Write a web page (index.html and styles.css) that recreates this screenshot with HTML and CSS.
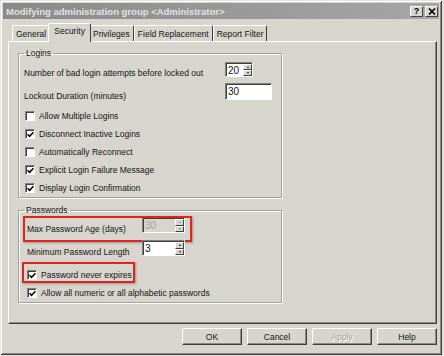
FILE: index.html
```html
<!DOCTYPE html>
<html>
<head>
<meta charset="utf-8">
<title>Modifying administration group</title>
<link rel="stylesheet" href="styles.css">
</head>
<body>
<div class="window">
  <div class="titlebar">
    <span class="caption">Modifying administration group &lt;Administrator&gt;</span>
    <span class="capbtn help">?</span>
    <span class="capbtn"><svg width="8" height="7" viewBox="0 0 8 7"><path d="M1 0.5 L7 6.5 M7 0.5 L1 6.5" stroke="#000" stroke-width="1.6"/></svg></span>
  </div>

  <div class="tabs">
    <div class="tab">General</div>
    <div class="tab sel">Security</div>
    <div class="tab">Privileges</div>
    <div class="tab">Field Replacement</div>
    <div class="tab">Report Filter</div>
  </div>

  <div class="panel">
    <fieldset class="group logins">
      <legend>Logins</legend>
      <div class="row first">
        <span class="lbl">Number of bad login attempts before locked out</span>
        <div class="spin s20"><span class="val">20</span><div class="arrows"><span><i class="up"></i></span><span><i class="down"></i></span></div></div>
      </div>
      <div class="row second">
        <span class="lbl">Lockout Duration (minutes)</span>
        <div class="edit"><span class="val">30</span></div>
      </div>
      <div class="checks">
        <label class="check"><span class="cb"></span>Allow Multiple Logins</label>
        <label class="check"><span class="cb on"><svg width="7" height="7" viewBox="0 0 7 7"><path d="M0.5 3.2 L2.6 5.4 L6.5 1.2" fill="none" stroke="#000" stroke-width="1.6"/></svg></span>Disconnect Inactive Logins</label>
        <label class="check"><span class="cb"></span>Automatically Reconnect</label>
        <label class="check"><span class="cb on"><svg width="7" height="7" viewBox="0 0 7 7"><path d="M0.5 3.2 L2.6 5.4 L6.5 1.2" fill="none" stroke="#000" stroke-width="1.6"/></svg></span>Explicit Login Failure Message</label>
        <label class="check"><span class="cb on"><svg width="7" height="7" viewBox="0 0 7 7"><path d="M0.5 3.2 L2.6 5.4 L6.5 1.2" fill="none" stroke="#000" stroke-width="1.6"/></svg></span>Display Login Confirmation</label>
      </div>
    </fieldset>

    <fieldset class="group passwords">
      <legend>Passwords</legend>
      <div class="row first marked">
        <span class="lbl">Max Password Age (days)</span>
        <div class="spin s30 disabled"><span class="val">30</span><div class="arrows"><span><i class="up"></i></span><span><i class="down"></i></span></div></div>
        <span class="redbox box1"></span>
      </div>
      <div class="row second">
        <span class="lbl">Minimum Password Length</span>
        <div class="spin s30"><span class="val">3</span><div class="arrows"><span><i class="up"></i></span><span><i class="down"></i></span></div></div>
      </div>
      <div class="checks">
        <label class="check marked"><span class="cb on"><svg width="7" height="7" viewBox="0 0 7 7"><path d="M0.5 3.2 L2.6 5.4 L6.5 1.2" fill="none" stroke="#000" stroke-width="1.6"/></svg></span>Password never expires<span class="redbox box2"></span></label>
        <label class="check"><span class="cb on"><svg width="7" height="7" viewBox="0 0 7 7"><path d="M0.5 3.2 L2.6 5.4 L6.5 1.2" fill="none" stroke="#000" stroke-width="1.6"/></svg></span>Allow all numeric or all alphabetic passwords</label>
      </div>
    </fieldset>
  </div>

  <div class="buttons">
    <div class="btn">OK</div>
    <div class="btn">Cancel</div>
    <div class="btn disabled">Apply</div>
    <div class="btn">Help</div>
  </div>
</div>
</body>
</html>
```

FILE: styles.css
```css
html, body {
  margin: 0;
}
body {
  background: #e4e3de;
  font-family: "Liberation Sans", Arial, sans-serif;
  font-size: 8.5px;
  color: #141414;
}
.window {
  width: 442px;
  height: 355px;
  box-sizing: border-box;
  padding: 3px;
  background: #d7d5ce;
  box-shadow: inset 1px 1px 0 #e6e5e0, inset -1px -1px 0 #404040, inset 2px 2px 0 #fff, inset -2px -2px 0 #8a8a86;
}

/* title bar */
.titlebar {
  height: 16px;
  display: flex;
  align-items: center;
  gap: 2px;
  padding-right: 1px;
  background: linear-gradient(to right, #8a8a8a, #a6a6a6);
}
.caption {
  flex: 1;
  padding-left: 3px;
  font-size: 9.5px;
  font-weight: bold;
  color: #e2e2e2;
}
.capbtn {
  width: 13px;
  height: 11px;
  box-sizing: border-box;
  background: #d7d5ce;
  border: 1px solid;
  border-color: #fff #404040 #404040 #fff;
  display: flex;
  align-items: center;
  justify-content: center;
  font-weight: bold;
  font-size: 9px;
  line-height: 9px;
  color: #000;
}

/* tabs */
.tabs {
  display: flex;
  align-items: flex-end;
  height: 18px;
  margin-top: 4px;
  padding-left: 9px;
  position: relative;
  z-index: 1;
}
.tab {
  height: 16px;
  box-sizing: border-box;
  padding: 3px 3px 0;
  border: 1px solid;
  border-bottom: none;
  border-color: #fff #3c3c3c transparent #fff;
  border-radius: 2px 2px 0 0;
  line-height: 11px;
  white-space: nowrap;
}
.tab.sel {
  height: 19px;
  margin: 0 -2px -1px;
  padding: 2px 5px 0;
  background: #d7d5ce;
  position: relative;
}

/* page */
.panel {
  margin-left: 5px;
  width: 429px;
  height: 283px;
  box-sizing: border-box;
  border: 1px solid;
  border-color: #fff #404040 #404040 #fff;
  box-shadow: inset -1px -1px 0 #8a8a86;
  padding-left: 9px;
}
.group {
  margin: 0;
  padding: 0;
  min-width: 0;
  width: 264px;
  box-sizing: border-box;
  border: 1px solid #a3a19a;
  box-shadow: 1px 1px 0 #fff, inset 1px 1px 0 #fff;
}
.group legend {
  padding: 0 2px;
  margin-left: 5px;
  line-height: 11px;
}
.logins {
  margin-top: 6px;
}
.passwords {
  margin-top: 7px;
}

.row {
  display: flex;
  align-items: flex-end;
  position: relative;
}
.lbl {
  line-height: 11px;
  margin-bottom: -2px;
}
.logins .row {
  padding-left: 5px;
}
.logins .lbl {
  width: 201px;
}
.logins .first {
  margin-top: 3px;
}
.logins .second {
  margin-top: 6px;
}
.passwords .row {
  padding-left: 8px;
}
.passwords .lbl {
  width: 115px;
}
.passwords .first {
  margin-top: 1px;
}
.passwords .second {
  margin-top: 7px;
}

/* inputs */
.spin, .edit {
  display: flex;
  box-sizing: border-box;
  background: #fff;
  border: 1px solid;
  border-color: #808080 #fff #fff #808080;
  box-shadow: inset 1px 1px 0 #404040;
}
.val {
  flex: 1;
  padding: 2px 0 0 2px;
  font-size: 10px;
  line-height: 11px;
}
.s20 {
  width: 28px;
  height: 15px;
}
.s30 {
  width: 43px;
  height: 16px;
}
.edit {
  width: 47px;
  height: 17px;
}
.spin.disabled {
  background: #d7d5ce;
}
.spin.disabled .val {
  color: #a3a29c;
}
.arrows {
  width: 9px;
  display: flex;
  flex-direction: column;
  padding: 1px 0 0;
}
.arrows span {
  flex: 1;
  background: #d7d5ce;
  border: 1px solid;
  border-color: #fff #404040 #404040 #fff;
  display: flex;
  align-items: center;
  justify-content: center;
}
.arrows i {
  width: 0;
  height: 0;
  border-left: 1.5px solid transparent;
  border-right: 1.5px solid transparent;
}
.arrows .up {
  border-bottom: 2px solid #222;
}
.arrows .down {
  border-top: 2px solid #222;
}
.disabled .arrows i {
  opacity: 0.4;
}

/* checkboxes */
.checks {
  display: flex;
  flex-direction: column;
}
.logins .checks {
  margin-top: 7px;
  padding-left: 6px;
}
.passwords .checks {
  margin-top: 10px;
  padding-left: 8px;
}
.check {
  height: 18px;
  display: flex;
  align-items: center;
  gap: 4px;
  position: relative;
  line-height: 11px;
}
.cb {
  width: 10px;
  height: 10px;
  box-sizing: border-box;
  background: #fff;
  border: 1px solid;
  border-color: #808080 #fff #fff #808080;
  box-shadow: inset 1px 1px 0 #404040;
  display: flex;
  align-items: center;
  justify-content: center;
}

/* annotation boxes */
.redbox {
  position: absolute;
  box-sizing: border-box;
  border: 2px solid #e1231b;
  box-shadow: 1px 1px 2px rgba(0, 0, 0, 0.3);
}
.box1 {
  left: 4px;
  top: -1px;
  width: 169px;
  height: 26px;
}
.box2 {
  left: -5px;
  top: -4px;
  width: 113px;
  height: 21px;
}

/* buttons */
.buttons {
  display: flex;
  justify-content: flex-end;
  gap: 5px;
  margin-top: 4px;
  padding-right: 2px;
}
.btn {
  width: 60px;
  height: 17px;
  box-sizing: border-box;
  border: 1px solid;
  border-color: #fff #404040 #404040 #fff;
  box-shadow: inset -1px -1px 0 #8a8a86;
  display: flex;
  align-items: center;
  justify-content: center;
}
.btn.disabled {
  color: #a3a29c;
  text-shadow: 1px 1px 0 #fff;
}
```
